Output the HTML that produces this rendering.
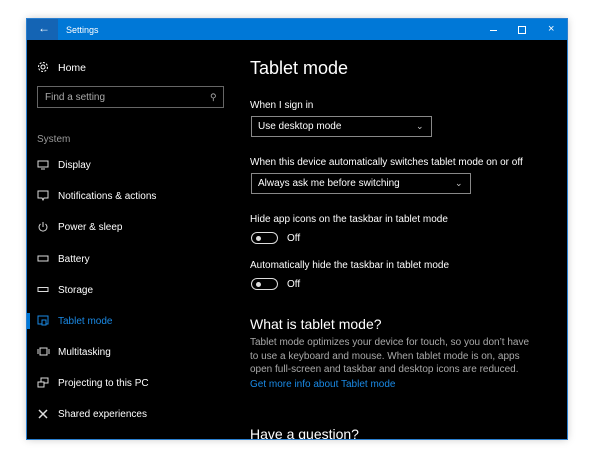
<!DOCTYPE html>
<html><head><style>
body{margin:0;width:600px;height:463px;background:#fff;position:relative;overflow:hidden;font-family:"Liberation Sans",sans-serif;}
.win{position:absolute;left:27px;top:19px;width:540px;height:420px;background:#000;box-shadow:0 0 8px rgba(0,0,0,.25);outline:1px solid #2a7fd0;overflow:hidden;}
.t{position:absolute;color:#fff;font-size:10px;white-space:nowrap;line-height:12px;}
.tb{position:absolute;left:0;top:0;width:540px;height:21px;background:#0078d7;}
.ic{position:absolute;left:10px;}
</style></head><body>
<div class="win">
<div class="tb"><div style="position:absolute;left:0;top:0;width:31px;height:21px;background:#1464b4"></div>
<div class="t" style="left:11px;top:3px;font-size:12px">&#8592;</div>
<div class="t" style="left:39px;top:5px;font-size:9px">Settings</div>
<div style="position:absolute;left:463px;top:11px;width:7px;height:1px;background:#fff"></div>
<div style="position:absolute;left:491px;top:7px;width:6px;height:6px;border:1px solid #fff"></div>
<div class="t" style="left:521px;top:4px;font-size:11px">&#215;</div>
</div>
<svg class="ic" style="top:42px" width="12" height="12" viewBox="0 0 12 12"><circle cx="6" cy="6" r="2" fill="none" stroke="#fff"/><circle cx="6" cy="6" r="4.5" fill="none" stroke="#fff" stroke-dasharray="2 1.5"/></svg>
<div class="t" style="left:31px;top:43px;font-size:10.5px">Home</div>
<div style="position:absolute;left:10px;top:67px;width:185px;height:20px;border:1px solid #666"></div>
<div class="t" style="left:18px;top:73px;color:#aaa">Find a setting</div>
<div class="t" style="left:183px;top:72px;color:#aaa;font-size:9px">&#9906;</div>
<div class="t" style="left:10px;top:115px;color:#999">System</div>
<svg class="ic" style="top:141px" width="12" height="10"><rect x="1" y="1" width="10" height="6" fill="none" stroke="#ddd"/><path d="M4 9h4" stroke="#ddd"/></svg>
<div class="t" style="left:31px;top:141px">Display</div>
<svg class="ic" style="top:171px" width="12" height="12"><path d="M1 1h10v7H7l-1 2-1-2H1z" fill="none" stroke="#ddd"/></svg>
<div class="t" style="left:31px;top:172px">Notifications &amp; actions</div>
<svg class="ic" style="top:202px" width="12" height="12"><path d="M3.5 3a4 4 0 1 0 5 0M6 1v5" fill="none" stroke="#ddd"/></svg>
<div class="t" style="left:31px;top:203px">Power &amp; sleep</div>
<svg class="ic" style="top:236px" width="12" height="8"><rect x="1" y="1" width="10" height="5" fill="none" stroke="#ddd"/></svg>
<div class="t" style="left:31px;top:235px">Battery</div>
<svg class="ic" style="top:267px" width="12" height="8"><rect x="1" y="1.5" width="10" height="4" fill="none" stroke="#ddd"/></svg>
<div class="t" style="left:31px;top:266px">Storage</div>
<div style="position:absolute;left:0;top:294px;width:3px;height:16px;background:#0078d7"></div>
<svg class="ic" style="top:296px" width="12" height="12"><rect x="1" y="1" width="10" height="8" fill="none" stroke="#1a8ae6"/><rect x="5" y="5" width="4" height="5" fill="#000" stroke="#1a8ae6"/></svg>
<div class="t" style="left:31px;top:297px;color:#1a8ae6">Tablet mode</div>
<svg class="ic" style="top:328px" width="13" height="10"><rect x="3" y="1" width="7" height="7" fill="none" stroke="#ddd"/><path d="M1 2v5M12 2v5" stroke="#ddd"/></svg>
<div class="t" style="left:31px;top:328px">Multitasking</div>
<svg class="ic" style="top:358px" width="12" height="12"><rect x="4" y="1" width="7" height="5" fill="none" stroke="#ddd"/><rect x="1" y="5" width="6" height="5" fill="#000" stroke="#ddd"/></svg>
<div class="t" style="left:31px;top:359px">Projecting to this PC</div>
<svg class="ic" style="top:389px" width="12" height="12"><path d="M2 2l8 8M10 2l-8 8" stroke="#ddd" stroke-width="1.5"/></svg>
<div class="t" style="left:31px;top:390px">Shared experiences</div>
<div class="t" style="left:223px;top:38px;font-size:18px;line-height:22px">Tablet mode</div>
<div class="t" style="left:223px;top:81px">When I sign in</div>
<div style="position:absolute;left:224px;top:97px;width:179px;height:19px;border:1px solid #888"></div>
<div class="t" style="left:231px;top:102px">Use desktop mode</div>
<div class="t" style="left:389px;top:101px;font-size:9px;color:#ccc">&#8964;</div>
<div class="t" style="left:223px;top:138px">When this device automatically switches tablet mode on or off</div>
<div style="position:absolute;left:224px;top:154px;width:218px;height:19px;border:1px solid #888"></div>
<div class="t" style="left:231px;top:159px">Always ask me before switching</div>
<div class="t" style="left:428px;top:158px;font-size:9px;color:#ccc">&#8964;</div>
<div class="t" style="left:223px;top:195px">Hide app icons on the taskbar in tablet mode</div>
<div style="position:absolute;left:224px;top:213px;width:25px;height:10px;border:1.5px solid #ddd;border-radius:7px"></div>
<div style="position:absolute;left:229px;top:217px;width:5px;height:5px;border-radius:50%;background:#ddd"></div>
<div class="t" style="left:260px;top:214px">Off</div>
<div class="t" style="left:223px;top:241px">Automatically hide the taskbar in tablet mode</div>
<div style="position:absolute;left:224px;top:259px;width:25px;height:10px;border:1.5px solid #ddd;border-radius:7px"></div>
<div style="position:absolute;left:229px;top:263px;width:5px;height:5px;border-radius:50%;background:#ddd"></div>
<div class="t" style="left:260px;top:260px">Off</div>
<div class="t" style="left:223px;top:297px;font-size:14px;line-height:16px">What is tablet mode?</div>
<div class="t" style="left:223px;top:317px;color:#aaa;line-height:13.5px;white-space:normal;width:288px">Tablet mode optimizes your device for touch, so you don’t have to use a keyboard and mouse. When tablet mode is on, apps open full-screen and taskbar and desktop icons are reduced.</div>
<div class="t" style="left:223px;top:360px;color:#1a8ae6">Get more info about Tablet mode</div>
<div class="t" style="left:223px;top:407px;font-size:14px;line-height:16px">Have a question?</div>
</div>
</body></html>
